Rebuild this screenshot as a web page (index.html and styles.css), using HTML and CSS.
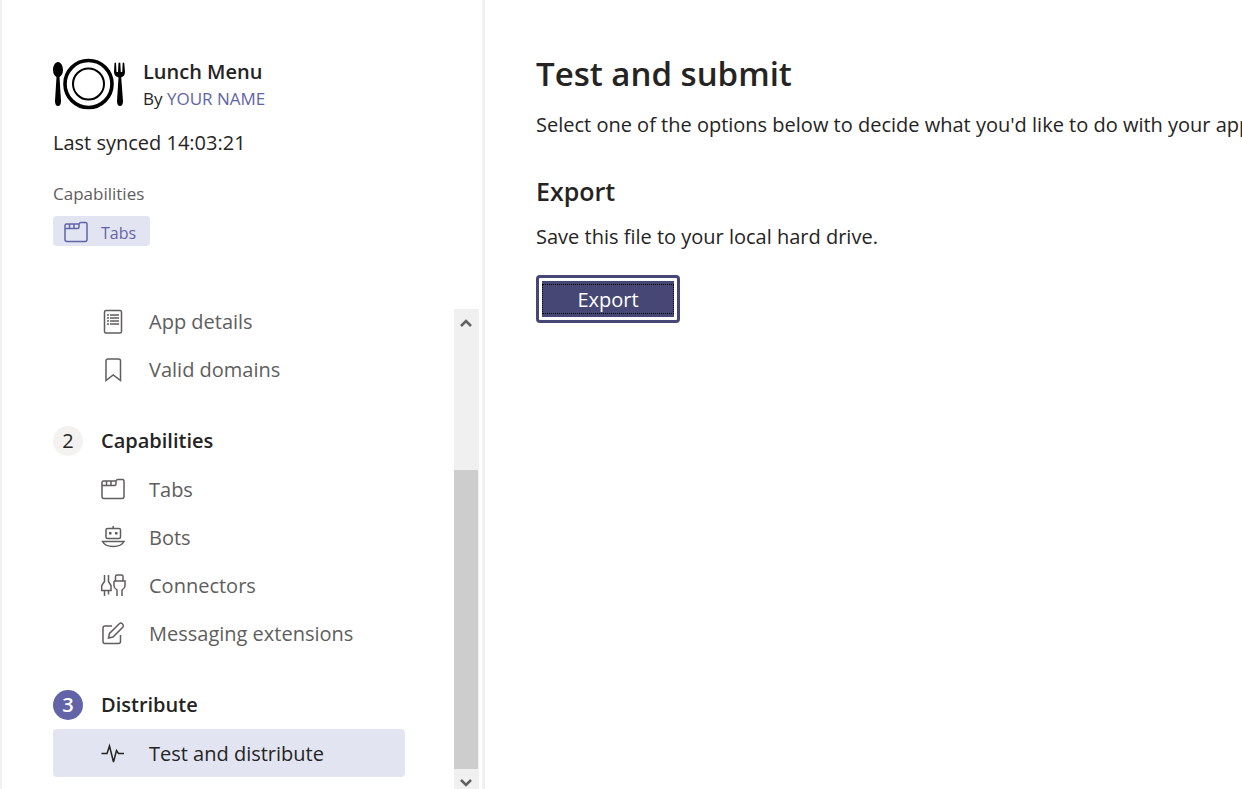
FILE: index.html
```html
<!DOCTYPE html>
<html lang="en">
<head>
<meta charset="utf-8">
<title>Test and submit</title>
<link rel="stylesheet" href="styles.css">
</head>
<body>
<svg class="sprite" aria-hidden="true">
  <symbol id="icon-tabs" viewBox="0 0 24 24"><path d="M1 18.500V4.500Q1 3 2.500 3H15Q15.500 1.500 17 1.500H21.500Q23 1.500 23 3V18.500Q23 20.500 21 20.500H3Q1 20.500 1 18.500M1 7.500H13.500Q15 7.500 15 6V3M5.500 3V7.500M10 3V7.500"/></symbol>
</svg>
<div class="app">
  <aside class="sidebar">
    <header class="summary">
      <div class="product">
        <svg class="logo" viewBox="0 0 72 52" role="img" aria-label="Lunch Menu logo">
          <circle cx="35.500" cy="26" r="23.500" fill="none" stroke="#000" stroke-width="3.600"/>
          <circle cx="35.500" cy="26" r="15.500" fill="none" stroke="#000" stroke-width="2"/>
          <path d="M5 4C8 4 10 8 10 12C10 16 8 18 6.500 19L8 43Q8 48 5 48Q2 48 2 43L3.500 19C2 18 0 16 0 12C0 8 2 4 5 4Z"/>
          <path d="M61.500 5Q62.400 4 63 5L63.500 14H65L65.500 5Q66.500 4 67.300 5L67.800 14H69.200L69.700 5Q70.500 4 71.200 5L72 14Q72 18 68.200 19.500L70 43Q70 48 67 48Q64 48 64 43L65.500 19.500Q61 18 61 14Z"/>
        </svg>
        <div>
          <h2 class="product-name">Lunch Menu</h2>
          <p class="author">By <a href="#author">YOUR NAME</a></p>
        </div>
      </div>
      <p class="synced">Last synced 14:03:21</p>
      <p class="caption">Capabilities</p>
      <a class="chip" href="#tabs"><svg class="icon"><use href="#icon-tabs"/></svg>Tabs</a>
    </header>
    <div class="steps">
      <nav class="nav">
        <ul class="list">
          <li><a class="item" href="#details"><svg class="icon" viewBox="0 0 24 24"><rect x="3.500" y="0.500" width="17" height="22.500" rx="1.500"/><path d="M6 5H8M6 8H8M6 11H8M6 14H8M9 5H18M9 8H18M9 11H18M9 14H18"/></svg>App details</a></li>
          <li><a class="item" href="#domains"><svg class="icon" viewBox="0 0 24 24"><path d="M5 22.500V3Q5 1 7 1H17.500Q19.500 1 19.500 3V22.500L12.200 17Z"/></svg>Valid domains</a></li>
        </ul>
        <h3 class="step"><span class="number">2</span>Capabilities</h3>
        <ul class="list">
          <li><a class="item" href="#tabs"><svg class="icon"><use href="#icon-tabs"/></svg>Tabs</a></li>
          <li><a class="item" href="#bots"><svg class="icon" viewBox="0 0 24 24"><rect x="5" y="2.500" width="14.500" height="10" rx="1.500"/><path d="M12.200 0V2.500M1.500 15.500H23Q20.500 20.500 12.200 20.500Q4 20.500 1.500 15.500Z"/><path class="dots" d="M8 6H10.500V8.500H8ZM14 6H16.500V8.500H14Z"/></svg>Bots</a></li>
          <li><a class="item" href="#connectors"><svg class="icon wide" viewBox="0 0 24 24"><path d="M3.500 1V7.500L0.700 11.500V16.500H10V11.500L7.500 7.500V1M3.500 16.500V22M7.500 16.500V20.500M14.500 7V2.500Q14.500 1 16 1H20.500Q22 1 22 2.500V7M13 7H24V12Q24 14 21 16V22M13 7V12Q13 14 16 16V22"/></svg>Connectors</a></li>
          <li><a class="item" href="#extensions"><svg class="icon" viewBox="0 0 24 24"><path d="M11 4H4Q2 4 2 6V19.500Q2 21.500 4 21.500H17.500Q19.500 21.500 19.500 19.500V13M7.500 16L8.500 11.500L18.500 1.500Q20 0.500 21.500 2Q23 3.500 22 5L12 15Z"/></svg>Messaging extensions</a></li>
        </ul>
        <h3 class="step"><span class="number current">3</span>Distribute</h3>
        <ul class="list">
          <li><a class="item selected" href="#test" aria-current="page"><svg class="icon" viewBox="0 0 24 24"><path d="M0.500 11.500H6L8.500 4L12.500 20L15.500 8.500L17.500 11.500H23"/></svg>Test and distribute</a></li>
        </ul>
      </nav>
      <div class="scrollbar" aria-hidden="true">
        <svg class="arrow" viewBox="0 0 14 10"><path d="M2 8L7 3L12 8"/></svg>
        <div class="thumb"></div>
        <svg class="arrow" viewBox="0 0 14 10"><path d="M2 2L7 7L12 2"/></svg>
      </div>
    </div>
  </aside>
  <main class="content">
    <h1 class="title">Test and submit</h1>
    <p class="text">Select one of the options below to decide what you'd like to do with your app.</p>
    <h2 class="subtitle">Export</h2>
    <p class="text">Save this file to your local hard drive.</p>
    <button class="export" type="button"><span class="export-label">Export</span></button>
  </main>
</div>
</body>
</html>
```
FILE: styles.css
```css
* {
  box-sizing: border-box;
}

body {
  margin: 0;
  background: #fff;
  color: #252423;
  font: 20px/30px "Segoe UI", "Open Sans", "Noto Sans", sans-serif;
}

h1, h2, h3, p, ul {
  margin: 0;
  padding: 0;
  font-weight: 600;
}

p, ul {
  font-weight: 400;
}

ul {
  list-style: none;
}

a {
  color: #6264a7;
  text-decoration: none;
}

.sprite {
  display: none;
}

.app {
  display: grid;
  grid-template-columns: 485px 1fr;
  height: 100vh;
  overflow: hidden;
}

.sidebar {
  display: flex;
  flex-direction: column;
  min-height: 0;
  border-left: 2px solid #f0f0f0;
  border-right: 3px solid #f0f0f0;
}

.summary {
  padding: 58px 51px 0;
}

.product {
  display: flex;
  gap: 18px;
}

.logo {
  width: 72px;
  height: 52px;
}

.product-name {
  font-size: 20px;
  line-height: 28px;
}

.author {
  font-size: 17px;
  line-height: 26px;
}

.synced {
  margin-top: 16px;
}

.caption {
  margin-top: 24px;
  color: #605e5c;
  font-size: 17px;
  line-height: 24px;
}

.chip {
  display: flex;
  align-items: center;
  gap: 13px;
  width: max-content;
  height: 30px;
  margin-top: 10px;
  padding: 4px 14px 0 11px;
  border-radius: 4px;
  background: #e2e4f2;
  font-size: 16px;
}

.icon {
  flex: none;
  width: 24px;
  height: 24px;
  overflow: visible;
  fill: none;
  stroke: currentColor;
  stroke-width: 1.5;
}

.dots {
  fill: currentColor;
  stroke: none;
}

.steps {
  display: flex;
  flex: 1;
  justify-content: space-between;
  min-height: 0;
  margin-top: 51px;
  padding: 0 3px 0 51px;
}

.nav {
  width: 352px;
}

.item {
  display: flex;
  align-items: center;
  gap: 24px;
  height: 48px;
  padding: 2px 0 0 48px;
  border-radius: 4px;
  color: #605e5c;
}

.selected {
  background: #e2e4f2;
  color: #252423;
}

.step {
  display: flex;
  align-items: center;
  gap: 18px;
  height: 48px;
  margin-top: 24px;
  font-size: 20px;
}

.number {
  width: 30px;
  height: 30px;
  border-radius: 50%;
  background: #f3f2f1;
  font-weight: 400;
  text-align: center;
}

.current {
  background: #6264a7;
  color: #fff;
  font-weight: 600;
}

.scrollbar {
  display: grid;
  grid-template-rows: 161px 1fr 20px;
  width: 25px;
  margin-top: 12px;
  background: #f0f0f0;
}

.arrow {
  width: 14px;
  height: 10px;
  margin: 9px 0 0 5px;
  fill: none;
  stroke: #606060;
  stroke-width: 2.5;
}

.thumb {
  margin-right: 1px;
  background: #cdcdcd;
}

.content {
  min-width: 0;
  padding: 48px 0 0 51px;
  white-space: nowrap;
}

.title {
  font-size: 33px;
  line-height: 52px;
}

.text {
  margin-top: 10px;
}

.subtitle {
  margin-top: 30px;
  font-size: 25px;
  line-height: 42px;
}

.export {
  width: 144px;
  height: 48px;
  margin-top: 23px;
  padding: 3px;
  border: 3px solid #464775;
  border-radius: 4px;
  background: #464775 content-box;
  color: #fff;
  font: inherit;
}

.export-label {
  display: block;
  padding-top: 2px;
  border: 1px dotted #000;
  line-height: 26px;
}
```
